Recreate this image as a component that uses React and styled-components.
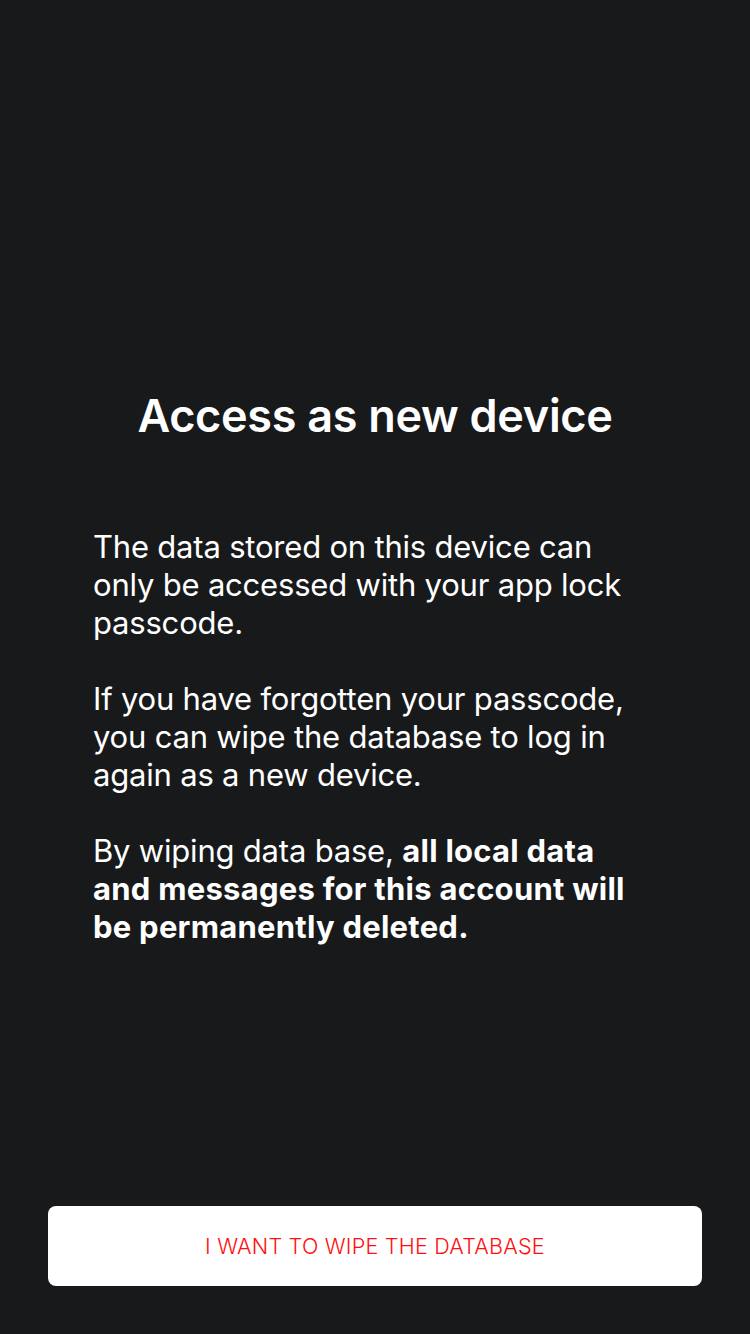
import React from 'react'
import styled, { createGlobalStyle } from 'styled-components'

const GlobalStyle = createGlobalStyle`
  html, body {
    margin: 0;
    padding: 0;
    background: #18191b;
  }
  * { box-sizing: border-box; }
`

const App = () => {
  return (
    <Screen>
      <GlobalStyle />
      <Title>Access as new device</Title>
      <Body>
        <Paragraph>
          The data stored on this device can only be accessed with your app lock passcode.
        </Paragraph>
        <Paragraph>
          If you have forgotten your passcode, you can wipe the database to log in again as a new device.
        </Paragraph>
        <Paragraph>
          By wiping data base, <strong>all local data and messages for this account will be permanently deleted.</strong>
        </Paragraph>
      </Body>
      <Footer>
        <WipeButton>I WANT TO WIPE THE DATABASE</WipeButton>
      </Footer>
    </Screen>
  )
}

export default App

const Screen = styled.div`
  height: 1334px;
  display: flex;
  flex-direction: column;
  background: #18191b;
  color: #ffffff;
  font-family: Inter, "Noto Sans", sans-serif;
  padding-top: 387px;
`

const Title = styled.h1`
  margin: 0;
  font-size: 45px;
  line-height: 58px;
  font-weight: 600;
  text-align: center;
  letter-spacing: -0.3px;
`

const Body = styled.div`
  margin-top: 83px;
  padding: 0 118px 0 93px;
  display: flex;
  flex-direction: column;
  gap: 38px;
`

const Paragraph = styled.p`
  margin: 0;
  font-size: 31px;
  line-height: 38px;
  font-weight: 400;
  letter-spacing: -0.2px;

  strong {
    font-weight: 700;
    letter-spacing: 0.25px;
  }
`

const Footer = styled.div`
  margin-top: auto;
  padding: 0 48px 48px;
`

const WipeButton = styled.button`
  width: 100%;
  height: 80px;
  border: none;
  border-radius: 8px;
  background: #ffffff;
  color: #ff0f0f;
  font-family: Inter, "Noto Sans", sans-serif;
  font-size: 21.6px;
  font-weight: 300;
  letter-spacing: 0.2px;
  cursor: pointer;
`
